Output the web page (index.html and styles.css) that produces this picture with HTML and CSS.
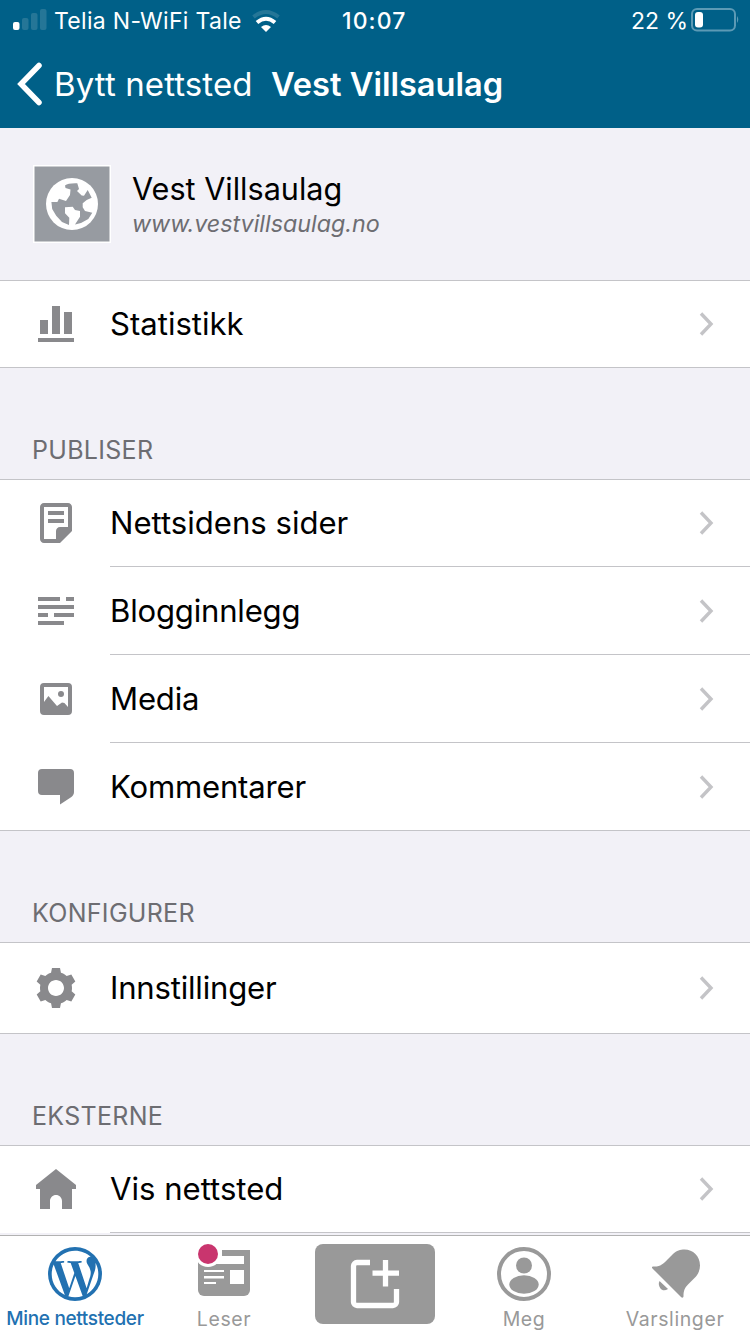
FILE: index.html
```html
<!DOCTYPE html>
<html lang="nb">
<head>
    <meta charset="UTF-8">
    <title>Vest Villsaulag</title>
    <link rel="stylesheet" href="styles.css">
</head>
<body>
<div class="screen">
    <header class="top">
        <div class="status">
            <svg class="signal" width="34" height="22" viewBox="0 0 34 22">
                <rect x="0" y="13" width="6.5" height="8" rx="2" fill="#fff"/>
                <g fill="#257697">
                    <rect x="9" y="9" width="6.5" height="12" rx="2"/>
                    <rect x="18" y="4" width="6.5" height="17" rx="2"/>
                    <rect x="27" y="0" width="6.5" height="21" rx="2"/>
                </g>
            </svg>
            <span class="carrier">Telia N-WiFi Tale</span>
            <svg class="wifi" width="28" height="22" viewBox="0 0 28 22">
                <path d="M1.5 7Q14-3 26.5 7" fill="none" stroke="#257697" stroke-width="4"/>
                <path d="M5 12.5Q14 5 23 12.5" fill="none" stroke="#fff" stroke-width="4"/>
                <path d="M9 17q5-4 10 0l-5 5z" fill="#fff"/>
            </svg>
            <span class="time">10:07</span>
            <span class="percent">22 %</span>
            <svg class="battery" width="48" height="24" viewBox="0 0 48 24">
                <rect x="1" y="1" width="43" height="21.5" rx="5" fill="none" stroke="#5c9ab5" stroke-width="2"/>
                <rect x="4" y="4" width="8" height="15.5" rx="3" fill="#fff"/>
                <path d="M46 8q2.500 3.500 0 7z" fill="#5c9ab5"/>
            </svg>
        </div>
        <div class="nav">
            <svg class="back" width="26" height="44" viewBox="0 0 26 44"><path d="M22 3.500L4 22l18 18.500" fill="none" stroke="#fff" stroke-width="5.500" stroke-linecap="round"/></svg>
            <span class="back-label">Bytt nettsted</span>
            <h1>Vest Villsaulag</h1>
        </div>
    </header>

    <main>
        <section class="site">
            <svg class="avatar" width="78" height="78" viewBox="0 0 78 78">
                <rect width="78" height="78" fill="#fff"/>
                <rect x="1.5" y="1.5" width="75" height="75" fill="#979ba1"/>
                <circle cx="39" cy="39" r="26" fill="#fff"/>
                <path fill="#979ba1" d="M32 20.500Q35 18 44.300 18.300L46 24l-2 2 4.700 4.500 2.300.2L54.700 25l4 7.700-5 2.300-4 3.300v4L52 46l7.300 1.700L55.300 54 48 58l-6 1.500 5-7.800V46l-5-1-2.300-3.300-7.700.6v6l4.300 4.400-.3 7.300-7-3-5.800-6.300-4-6.700-.8-7h6l1.600-3.300L33 36l4-6 .5-5.500-5-1.500z"/>
            </svg>
            <div class="site-text">
                <div class="site-name">Vest Villsaulag</div>
                <div class="site-url">www.vestvillsaulag.no</div>
            </div>
        </section>

        <ul class="list">
            <li>
                <svg class="icon" viewBox="0 0 24 24"><path d="M21 21H3v-2h18v2zM8 10H4v7h4v-7zm6-7h-4v14h4V3zm6 3h-4v11h4V6z"/></svg>
                <span class="label">Statistikk</span>
                <svg class="chevron" viewBox="0 0 16 26"><path d="M3 2.500L13 13 3 23.500"/></svg>
            </li>
        </ul>

        <h2>PUBLISER</h2>
        <ul class="list">
            <li>
                <svg class="icon" viewBox="0 0 24 24"><path d="M16 8H8V6h8v2zm0 2H8v2h8v-2zm4-6v12l-6 6H6c-1.105 0-2-.895-2-2V4c0-1.105.895-2 2-2h12c1.105 0 2 .895 2 2zm-2 10V4H6v16h6v-4c0-1.105.895-2 2-2h4z"/></svg>
                <span class="label">Nettsidens sider</span>
                <svg class="chevron" viewBox="0 0 16 26"><path d="M3 2.500L13 13 3 23.500"/></svg>
            </li>
            <li>
                <svg class="icon" viewBox="0 0 24 24"><path d="M16 19H3v-2h13v2zm5-10H3v2h18V9zM3 5v2h11V5H3zm14 0v2h4V5h-4zm-6 8v2h10v-2H11zm-8 0v2h5v-2H3z"/></svg>
                <span class="label tight">Blogginnlegg</span>
                <svg class="chevron" viewBox="0 0 16 26"><path d="M3 2.500L13 13 3 23.500"/></svg>
            </li>
            <li>
                <svg class="icon" viewBox="0 0 24 24"><path fill-rule="evenodd" d="M6 4h12a2 2 0 0 1 2 2v12a2 2 0 0 1-2 2H6a2 2 0 0 1-2-2V6a2 2 0 0 1 2-2zm0 2v7.500l2.200-3 4.300 5 2.500-1.800 1.200.3L18 16V6z"/><circle cx="14.5" cy="9.500" r="1.5"/></svg>
                <span class="label tight">Media</span>
                <svg class="chevron" viewBox="0 0 16 26"><path d="M3 2.500L13 13 3 23.500"/></svg>
            </li>
            <li>
                <svg class="icon" viewBox="0 0 24 24"><path d="M5 3h14a2 2 0 0 1 2 2v9.500c0 1-.5 1.900-1.300 2.500L14 20.800V16H5a2 2 0 0 1-2-2V5a2 2 0 0 1 2-2z"/></svg>
                <span class="label tight">Kommentarer</span>
                <svg class="chevron" viewBox="0 0 16 26"><path d="M3 2.500L13 13 3 23.500"/></svg>
            </li>
        </ul>

        <h2>KONFIGURER</h2>
        <ul class="list tall">
            <li>
                <svg class="icon" viewBox="0 0 24 24"><path d="M20 12c0-.568-.06-1.122-.174-1.656l1.834-1.612-2-3.464-2.322.786c-.82-.736-1.787-1.308-2.86-1.657L14 2h-4l-.48 2.396c-1.07.35-2.04.92-2.858 1.657L4.34 5.268l-2 3.464 1.834 1.612C4.06 10.878 4 11.432 4 12s.06 1.122.174 1.656L2.34 15.268l2 3.464 2.322-.786c.82.736 1.787 1.308 2.86 1.657L10 22h4l.48-2.396c1.07-.35 2.038-.92 2.858-1.657l2.322.786 2-3.464-1.834-1.613c.113-.535.174-1.09.174-1.656zm-8 4c-2.21 0-4-1.79-4-4s1.79-4 4-4 4 1.79 4 4-1.79 4-4 4z"/></svg>
                <span class="label tight">Innstillinger</span>
                <svg class="chevron" viewBox="0 0 16 26"><path d="M3 2.500L13 13 3 23.500"/></svg>
            </li>
        </ul>

        <h2>EKSTERNE</h2>
        <ul class="list last">
            <li>
                <svg class="icon" viewBox="0 -1 24 24"><path d="M22 9L12 1 2 9v2h2v10h5v-4c0-1.657 1.343-3 3-3s3 1.343 3 3v4h5V11h2V9z"/></svg>
                <span class="label">Vis nettsted</span>
                <svg class="chevron" viewBox="0 0 16 26"><path d="M3 2.500L13 13 3 23.500"/></svg>
            </li>
        </ul>
    </main>

    <nav class="tabs">
        <div class="tab active">
            <svg width="54" height="54" viewBox="2 2 20 20">
                <circle cx="12" cy="12" r="10" fill="#2271b1"/>
                <path fill="#fff" transform="translate(.48 .48) scale(.96)" d="M12.158 12.786l-2.698 7.84c.806.236 1.657.365 2.54.365 1.047 0 2.05-.18 2.986-.51-.024-.037-.046-.078-.065-.123l-2.762-7.57zM3.008 12c0 3.56 2.07 6.634 5.068 8.092L3.788 8.342c-.5 1.117-.78 2.354-.78 3.658zm15.06-.454c0-1.112-.398-1.88-.74-2.48-.456-.74-.883-1.368-.883-2.11 0-.825.627-1.595 1.51-1.595.04 0 .078.006.116.008-1.598-1.464-3.73-2.36-6.07-2.36-3.14 0-5.904 1.613-7.512 4.053.21.008.41.012.58.012.94 0 2.395-.114 2.395-.114.484-.028.54.684.057.74 0 0-.487.058-1.03.086l3.275 9.74 1.968-5.902-1.4-3.838c-.485-.028-.944-.085-.944-.085-.486-.03-.43-.77.056-.742 0 0 1.484.114 2.368.114.94 0 2.397-.114 2.397-.114.486-.028.543.684.058.74 0 0-.488.058-1.03.086l3.25 9.665.897-2.997c.456-1.17.684-2.137.684-2.907zm1.82-3.86c.04.286.06.593.06.924 0 .912-.17 1.938-.683 3.22l-2.746 7.94c2.672-1.558 4.47-4.454 4.47-7.77 0-1.564-.4-3.033-1.1-4.314z"/>
            </svg>
            <span>Mine nettsteder</span>
        </div>
        <div class="tab leser">
            <svg width="54" height="54" viewBox="0 0 54 54">
                <path fill="#999" d="M1 3h52v40a6 6 0 0 1-6 6H7a6 6 0 0 1-6-6z"/>
                <path fill="#fff" d="M7 9h40v8H7zM7 23h20v2H7zM7 29h20v2.500H7zM7 35h12v2H7zM33 23h14v14H33zM0 0h25v9H0z"/>
                <circle cx="11" cy="7" r="13" fill="#fff"/>
                <circle cx="11" cy="7" r="10" fill="#c9356e"/>
            </svg>
            <span>Leser</span>
        </div>
        <div class="tab new">
            <svg width="120" height="80" viewBox="0 0 120 80">
                <rect width="120" height="80" rx="8" fill="#999"/>
                <path d="M55 18.500H42a3.500 3.500 0 0 0-3.500 3.500v36a3.500 3.500 0 0 0 3.500 3.500h36a3.500 3.500 0 0 0 3.500-3.500V45M70.500 16v26.500M57.500 29.200H84" fill="none" stroke="#fff" stroke-width="5.300"/>
            </svg>
        </div>
        <div class="tab meg">
            <svg width="54" height="54" viewBox="0 0 54 54" fill="#999">
                <circle cx="27" cy="27" r="25" fill="none" stroke="#999" stroke-width="4"/>
                <circle cx="27" cy="18.5" r="8"/>
                <ellipse cx="27" cy="37.5" rx="14.7" ry="9.3"/>
            </svg>
            <span>Meg</span>
        </div>
        <div class="tab varsler">
            <svg width="54" height="54" viewBox="-2 0 54 54" fill="#999">
                <path d="M3.500 19.500C10 20 13 17 18 12l5-5C27 3.500 30 2.500 34.500 2.500 43 2.500 50 9 50 18.500c0 4-1.500 8-4 11l-8 8c-3 3-4.500 6-4.500 11.500 0 2-1.500 2-2.500 1L2.500 21.500c-1-1-.5-2 1-2z"/>
                <path d="M9.500 34l8.500 8c-3 2-6 1.500-7.500-.5s-2.500-5-1-7.500z"/>
            </svg>
            <span>Varslinger</span>
        </div>
    </nav>
</div>
</body>
</html>
```
FILE: styles.css
```css
* { box-sizing: border-box; }
body { margin: 0; font-family: Inter, "Liberation Sans", sans-serif; color: #000; background: #f2f1f7; }
svg { display: block; flex: none; overflow: visible; }
.screen { width: 750px; height: 1334px; display: flex; flex-direction: column; overflow: hidden; }

.top { height: 128px; flex: none; background: #006088; color: #fff; }
.status { height: 40px; display: flex; align-items: center; font-size: 23px; white-space: nowrap; padding: 1px 0 0 13px; }
.signal { margin-bottom: 2px; }
.carrier { width: 187px; margin-left: 7px; letter-spacing: .3px; }
.wifi { margin-left: 11px; }
.time { width: 66px; margin-left: 62px; font-weight: 500; letter-spacing: 1.1px; }
.percent { width: 56px; margin-left: 223px; }
.battery { margin: 0 0 1px 4px; }
.nav { height: 88px; display: flex; align-items: center; font-size: 33px; white-space: nowrap; padding-left: 17px; }
.back-label { width: 198px; margin-left: 11px; letter-spacing: .1px; }
.nav h1 { margin: 0 0 0 19px; font-size: 32.6px; font-weight: 600; }

main { flex: 1; min-height: 0; overflow: hidden; }
.site { height: 152px; padding: 2px 33px 0; display: flex; align-items: center; }
.avatar { margin-bottom: 2px; }
.site-text { margin-left: 21px; }
.site-name { font-size: 30.6px; line-height: 38px; }
.site-url { font-size: 23.3px; line-height: 32px; font-style: italic; color: #6d6d72; }

.list { list-style: none; margin: 0; padding: 0; background: #fff; border-top: 1px solid #c4c4c8; border-bottom: 1px solid #c4c4c8; }
.list li { height: 87px; padding: 0 36px 0 32px; display: flex; align-items: center; background: linear-gradient(#c4c4c8, #c4c4c8) 110px 100% / 100% 1px no-repeat; }
.list li + li { height: 88px; }
.list li:last-child { background: none; }
.list li:only-child { height: 86px; }
.list li:last-child:not(:only-child) { height: 87px; }
.list.tall li:only-child { height: 90px; }
.list.last { border-bottom: 0; }
.list.last li { height: 87px; background: linear-gradient(#c4c4c8, #c4c4c8) 110px 100% / 100% 1px no-repeat; }
.list li:first-child:not(:only-child), .list.last li { padding-bottom: 1px; }
.icon { width: 48px; height: 48px; fill: #89898c; }
.label { flex: 1; margin-left: 30px; font-size: 31.1px; }
.label.tight { letter-spacing: -.2px; }
.chevron { width: 16px; height: 26px; fill: none; stroke: #c4c4c7; stroke-width: 3.4; }
h2 { height: 111px; margin: 0; padding: 66px 32px 0; font-size: 25px; line-height: 32px; font-weight: 400; letter-spacing: .3px; color: #6d6d72; }

.tabs { height: 99px; flex: none; display: flex; background: #fff; border-top: 1px solid #b2b2b2; }
.tab { width: 150px; padding-top: 11px; display: flex; flex-direction: column; align-items: center; font-size: 19.5px; line-height: 24px; letter-spacing: .6px; color: #999; white-space: nowrap; }
.tab span { margin-top: 6px; }
.tab.active { color: #2271b1; font-weight: 500; font-size: 19px; letter-spacing: -.35px; }
.tab.new { padding-top: 8px; }
.tab.leser, .tab.meg { padding-right: 2px; }
```
